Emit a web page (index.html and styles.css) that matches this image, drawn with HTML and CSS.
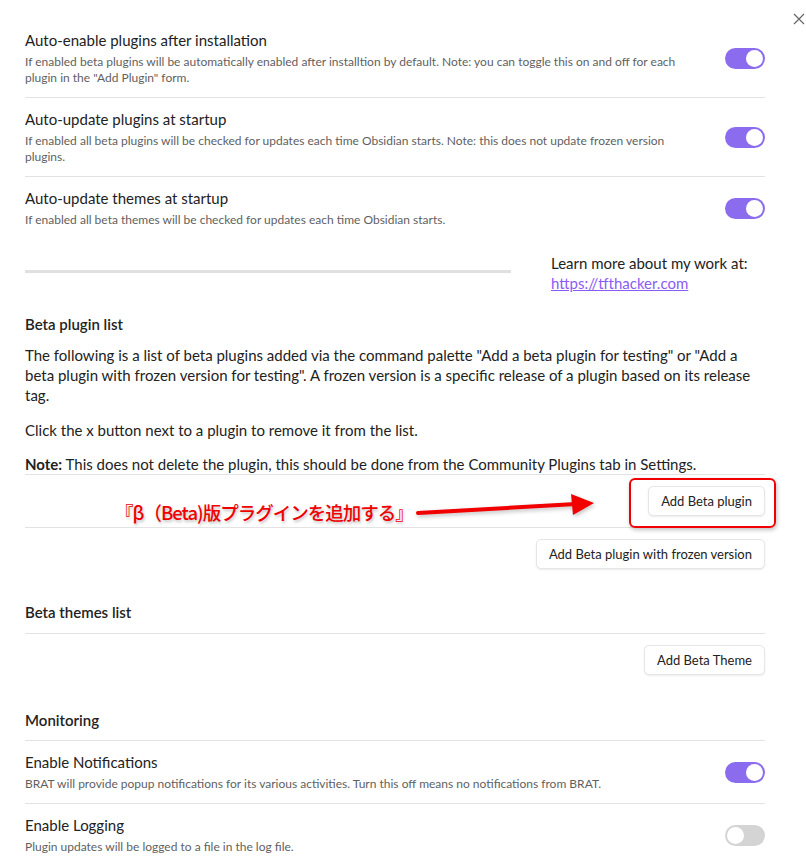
FILE: index.html
```html
<!DOCTYPE html>
<html lang="ja">
<head>
<meta charset="utf-8">
<link rel="stylesheet" href="styles.css">
</head>
<body>
<div class="modal">
  <button class="close" aria-label="Close">
    <svg width="12" height="12" viewBox="0 0 12 12"><path d="M1 1L11 11M11 1L1 11" stroke="#666" stroke-width="1.2" fill="none"/></svg>
  </button>
  <div class="content">
    <div class="item first">
      <div class="info">
        <div class="name">Auto-enable plugins after installation</div>
        <div class="desc">If enabled beta plugins will be automatically enabled after installtion by default. Note: you can toggle this on and off for each plugin in the "Add Plugin" form.</div>
      </div>
      <div class="control"><div class="toggle on"></div></div>
    </div>
    <div class="item">
      <div class="info">
        <div class="name">Auto-update plugins at startup</div>
        <div class="desc">If enabled all beta plugins will be checked for updates each time Obsidian starts. Note: this does not update frozen version plugins.</div>
      </div>
      <div class="control"><div class="toggle on"></div></div>
    </div>
    <div class="item">
      <div class="info">
        <div class="name">Auto-update themes at startup</div>
        <div class="desc">If enabled all beta themes will be checked for updates each time Obsidian starts.</div>
      </div>
      <div class="control"><div class="toggle on"></div></div>
    </div>

    <div class="learn">
      <div class="learn-rule"></div>
      <div class="learn-text">Learn more about my work at:<br><a href="#">https://tfthacker.com</a></div>
    </div>

    <div class="heading first-heading">Beta plugin list</div>
    <div class="section-desc">
      <p class="p1">The following is a list of beta plugins added via the command palette "Add a beta plugin for testing" or "Add a beta plugin with frozen version for testing". A frozen version is a specific release of a plugin based on its release tag.</p>
      <p class="p2">Click the x button next to a plugin to remove it from the list.</p>
      <p class="p3"><b>Note:</b> This does not delete the plugin, this should be done from the Community Plugins tab in Settings.</p>
    </div>
    <div class="item btn-row annotated">
      <div class="control"><button class="btn">Add Beta plugin</button></div>
      <div class="highlight"></div>
      <div class="note-text">『β（Beta)版プラグインを追加する』</div>
      <svg class="arrow" width="190" height="30" viewBox="0 0 190 30">
        <path d="M2 21 L160 12" stroke="#f20000" stroke-width="4" stroke-linecap="round" fill="none"/>
        <path d="M155 2 L178 11 L157 23 Z" fill="#f20000"/>
      </svg>
    </div>
    <div class="item btn-row">
      <div class="control"><button class="btn">Add Beta plugin with frozen version</button></div>
    </div>

    <div class="heading">Beta themes list</div>
    <div class="item btn-row">
      <div class="control"><button class="btn">Add Beta Theme</button></div>
    </div>

    <div class="heading monitoring">Monitoring</div>
    <div class="item">
      <div class="info">
        <div class="name">Enable Notifications</div>
        <div class="desc">BRAT will provide popup notifications for its various activities. Turn this off means no notifications from BRAT.</div>
      </div>
      <div class="control"><div class="toggle on"></div></div>
    </div>
    <div class="item">
      <div class="info">
        <div class="name">Enable Logging</div>
        <div class="desc">Plugin updates will be logged to a file in the log file.</div>
      </div>
      <div class="control"><div class="toggle"></div></div>
    </div>
  </div>
</div>
</body>
</html>
```
FILE: styles.css
```css
* { box-sizing: border-box; }
html, body { margin: 0; padding: 0; background: #fff; }
body {
  font-family: "Lato", "Noto Sans", sans-serif;
  color: #222;
  font-size: 15px;
  overflow: hidden;
}
.modal { position: relative; width: 806px; height: 864px; }
.close {
  position: absolute; top: 12px; right: 0; width: 14px; height: 14px;
  padding: 0; border: 0; background: none; display: flex; align-items: center; justify-content: center;
}
.content { padding: 19px 41px 0 25px; }

.item {
  display: flex; align-items: center;
  padding: 11px 0;
  border-top: 1px solid #e3e3e3;
}
.item.first { border-top: 0; }
.info { flex: 1; min-width: 0; padding-right: 40px; }
.name { font-size: 15px; line-height: 20px; color: #222; }
.desc { font-size: 12px; line-height: 16px; color: #5f5f5f; margin-top: 4px; }
.control { flex: none; display: flex; justify-content: flex-end; }
.btn-row { justify-content: flex-end; }

.toggle {
  position: relative; width: 40px; height: 21px; border-radius: 11px;
  background: #d4d4d4;
}
.toggle::after {
  content: ""; position: absolute; top: 2px; left: 2px; width: 17px; height: 17px;
  border-radius: 50%; background: #fff;
}
.toggle.on { background: #8b6cef; }
.toggle.on::after { left: 21px; }

.learn { display: flex; align-items: center; padding-top: 14px; }
.learn-rule { width: 486px; height: 3px; background: #e0e0e0; margin-top: -3px; }
.learn-text { margin-left: 40px; font-size: 15px; line-height: 20px; color: #222; }
.learn-text a { color: #8a5cf5; text-decoration: underline; }

.heading { font-size: 15px; line-height: 20px; font-weight: 600; padding: 22px 0 11px; color: #222; }
.first-heading { padding-top: 21px; padding-bottom: 0; }
.monitoring { padding-top: 24px; padding-bottom: 10px; }
.section-desc p { margin: 0; font-size: 15px; line-height: 20px; color: #222; }
.section-desc .p1 { margin-top: 11px; }
.section-desc .p2 { margin-top: 15px; }
.section-desc .p3 { margin-top: 14px; }
.section-desc b { font-weight: 700; }

.btn {
  font-family: inherit; font-size: 13px; color: #222;
  height: 30px; padding: 0 12px; background: #fff;
  border: 1px solid #e6e6e6; border-radius: 5px;
  box-shadow: 0 1px 2px rgba(0,0,0,0.08);
}

.annotated { position: relative; }
.highlight {
  position: absolute; left: 604px; top: 3px; width: 147px; height: 50px;
  border: 2px solid #f00000; border-radius: 6px;
  box-shadow: 1px 2px 4px rgba(0,0,0,0.25);
}
.note-text {
  position: absolute; left: 90px; top: 25px;
  font-family: "Noto Sans CJK JP", sans-serif; font-size: 18.5px; line-height: 24px;
  font-weight: 500; color: #f00000; letter-spacing: -1px;
  text-shadow: 1px 2px 3px rgba(0,0,0,0.25);
}
.arrow { position: absolute; left: 391px; top: 17px; filter: drop-shadow(1px 2px 2px rgba(0,0,0,0.25)); }
```
